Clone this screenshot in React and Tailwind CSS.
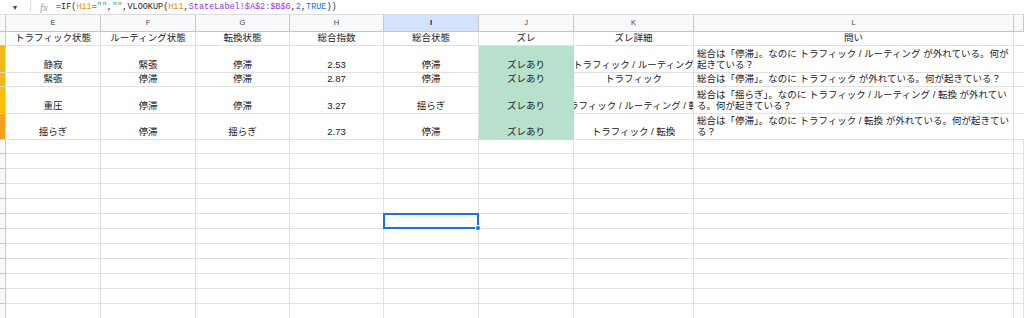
import React from 'react';

const COLS = 'grid grid-cols-[6px_95px_95px_94px_94px_95px_95px_120px_320px_10px]';

const rows = [
  {
    h: 'h-[27px]',
    mark: 'bg-[#efb91c]',
    cells: ['静寂', '緊張', '停滞', '2.53', '停滞', 'ズレあり', 'トラフィック / ルーティング'],
    q: ['総合は「停滞」。なのに トラフィック / ルーティング が外れている。何が', '起きている？'],
  },
  {
    h: 'h-[14px]',
    mark: 'bg-[#f1b81a]',
    cells: ['緊張', '停滞', '停滞', '2.87', '停滞', 'ズレあり', 'トラフィック'],
    q: ['総合は「停滞」。なのに トラフィック が外れている。何が起きている？'],
  },
  {
    h: 'h-[27px]',
    mark: 'bg-[#fbbc04]',
    cells: ['重圧', '停滞', '停滞', '3.27', '揺らぎ', 'ズレあり', 'トラフィック / ルーティング / 転換'],
    q: ['総合は「揺らぎ」。なのに トラフィック / ルーティング / 転換 が外れてい', 'る。何が起きている？'],
  },
  {
    h: 'h-[26px]',
    mark: 'bg-[#f7a11c]',
    cells: ['揺らぎ', '停滞', '揺らぎ', '2.73', '停滞', 'ズレあり', 'トラフィック / 転換'],
    q: ['総合は「停滞」。なのに トラフィック / 転換 が外れている。何が起きてい', 'る？'],
  },
];

const headers = ['トラフィック状態', 'ルーティング状態', '転換状態', '総合指数', '総合状態', 'ズレ', 'ズレ詳細', '問い'];
const letters = ['E', 'F', 'G', 'H', 'I', 'J', 'K', 'L', ''];

const cell = 'flex items-end justify-center pb-[2px] leading-[11px] overflow-hidden whitespace-nowrap border-r border-b';

const Formula = () => (
  <div className="flex items-center h-[15px] border-b border-[#dadce0] bg-white">
    <span className="w-[30px] text-center text-[7px] text-[#444746] leading-none">▼</span>
    <div className="w-px h-[12px] bg-[#dadce0] self-start" />
    <span className="ml-[9px] w-[16px] font-['Liberation_Serif',serif] italic text-[11px] leading-none text-[#9aa0a6]">fx</span>
    <span className="font-['Liberation_Mono',monospace] text-[8.5px] leading-none text-[#1f1f1f] whitespace-pre">
      =IF(<span className="text-[#e8910c]">H11</span>=<span className="text-[#34a853]">""</span>,<span className="text-[#34a853]">""</span>,VLOOKUP(<span className="text-[#e8910c]">H11</span>,<span className="text-[#9334e6]">StateLabel!$A$2:$B$6</span>,<span className="text-[#1a73e8]">2</span>,<span className="text-[#1a73e8]">TRUE</span>))
    </span>
  </div>
);

export default function App() {
  const empty = Array.from({ length: 12 });
  return (
    <div className="w-[1024px] h-[318px] overflow-hidden bg-white font-['Liberation_Sans','Noto_Sans_CJK_JP',sans-serif] text-[9.5px] text-[#202124]">
      <Formula />

      {/* column letters */}
      <div className={`${COLS} h-[17px] bg-[#f8f9fa] text-[7.5px] text-[#444746]`}>
        <div className="border-r border-b border-[#c4c7c5]" />
        {letters.map((l, i) => (
          <div
            key={i}
            className={
              l === 'I'
                ? 'flex items-center justify-center border-r border-b border-[#c4c7c5] bg-[#d3e3fd] text-[#041e49] font-bold'
                : 'flex items-center justify-center border-r border-b border-[#c4c7c5]'
            }
          >
            {l}
          </div>
        ))}
      </div>

      {/* header row */}
      <div className={`${COLS} h-[14px]`}>
        <div className="bg-[#f8f9fa] border-r border-b border-[#c4c7c5]" />
        {headers.map((t, i) => (
          <div key={i} className={`${cell} border-[#e1e1e1]`}>
            {t}
          </div>
        ))}
        <div className="border-b border-[#e1e1e1]" />
      </div>

      {/* data rows */}
      {rows.map((r, ri) => (
        <div key={ri} className={`${COLS} ${r.h}`}>
          <div className={`${r.mark} border-r border-b border-[#d9d9d9]`} />
          {r.cells.map((t, i) =>
            i === 5 ? (
              <div key={i} className={`${cell} bg-[#b7e1cd] border-[#b7e1cd]`}>
                {t}
              </div>
            ) : (
              <div key={i} className={`${cell} border-[#e1e1e1]`}>
                <span className="shrink-0">{t}</span>
              </div>
            )
          )}
          <div className="flex flex-col justify-end px-[3px] pb-[2px] leading-[11px] border-r border-b border-[#e1e1e1] whitespace-nowrap overflow-hidden">
            {r.q.map((line, k) => (
              <span key={k}>{line}</span>
            ))}
          </div>
          <div className="border-b border-[#e1e1e1]" />
        </div>
      ))}

      {/* empty rows */}
      {empty.map((_, ri) => (
        <div key={ri} className={`${COLS} ${ri === 0 ? 'h-[14px]' : 'h-[15px]'}`}>
          <div className="bg-[#f8f9fa] border-r border-b border-[#c4c7c5]" />
          {letters.map((_, i) => (
            <div key={i} className="relative border-r border-b border-[#e1e1e1]">
              {ri === 5 && i === 4 && (
                <div className="absolute -top-px -left-px -right-px -bottom-px z-10 border-2 border-[#1a73e8]">
                  <div className="absolute -right-[4px] -bottom-[4px] w-[6px] h-[6px] rounded-full bg-[#1a73e8] border border-white" />
                </div>
              )}
            </div>
          ))}
        </div>
      ))}
    </div>
  );
}
